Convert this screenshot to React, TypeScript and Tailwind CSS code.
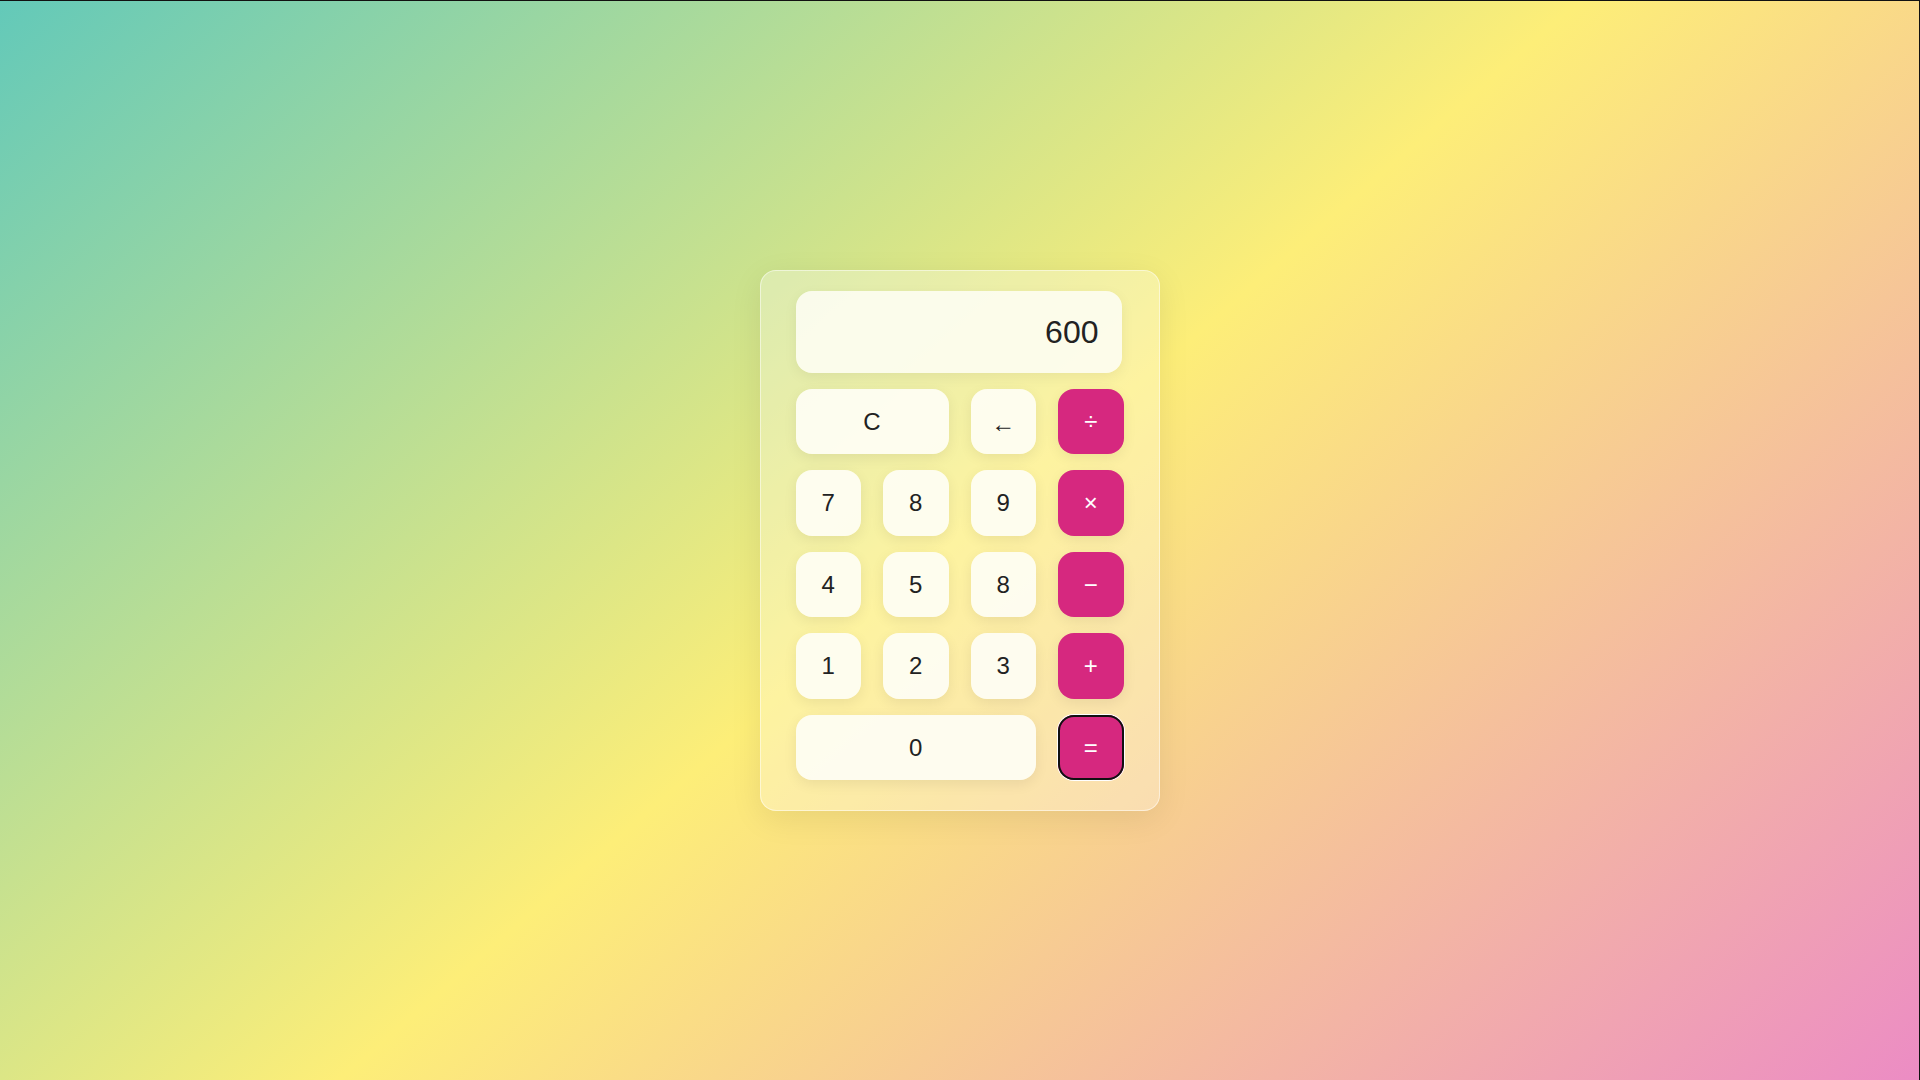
import { useState } from 'react';

const KEYS: { label: string; kind: 'num' | 'op' | 'fn'; span?: string }[] = [
  { label: 'C', kind: 'fn', span: 'col-span-2' },
  { label: '←', kind: 'fn' },
  { label: '÷', kind: 'op' },
  { label: '7', kind: 'num' },
  { label: '8', kind: 'num' },
  { label: '9', kind: 'num' },
  { label: '×', kind: 'op' },
  { label: '4', kind: 'num' },
  { label: '5', kind: 'num' },
  { label: '8', kind: 'num' },
  { label: '−', kind: 'op' },
  { label: '1', kind: 'num' },
  { label: '2', kind: 'num' },
  { label: '3', kind: 'num' },
  { label: '+', kind: 'op' },
  { label: '0', kind: 'num', span: 'col-span-3' },
  { label: '=', kind: 'op' },
];

export default function App() {
  const [display] = useState('600');

  return (
    <div
      className="min-h-screen w-full flex items-center justify-center border-t border-r border-[#111] bg-[linear-gradient(139deg,#63c9b9_0%,#fdee78_50%,#ec8cc4_100%)]"
      style={{ fontFamily: '"Liberation Sans", Arial, sans-serif' }}
    >
      <div className="w-[400px] rounded-2xl border border-white/50 bg-white/30 pt-[20px] px-[35px] pb-[30px] shadow-[0_8px_32px_rgba(0,0,0,0.08)]">
        {/* Display */}
        <div className="h-[82px] w-[326px] rounded-2xl bg-[#fdfdf2]/90 flex items-center justify-end px-[23px] shadow-[0_4px_14px_rgba(0,0,0,0.06)]">
          <span className="text-[32px] text-[#222] leading-none">{display}</span>
        </div>

        {/* Keys */}
        <div className="mt-4 grid grid-cols-4 gap-x-[22px] gap-y-4">
          {KEYS.map((k, i) => {
            const isEq = k.label === '=';
            const base =
              'h-[65.5px] rounded-2xl flex items-center justify-center text-[24px] leading-none';
            const tone =
              k.kind === 'op'
                ? 'bg-[#d6287f] text-white text-[20px] shadow-[0_4px_14px_rgba(0,0,0,0.07)]'
                : 'bg-[#fefdf2]/95 text-[#222] shadow-[0_4px_14px_rgba(0,0,0,0.07)]';
            return (
              <button
                key={i}
                className={`${base} ${tone} ${k.span ?? ''} ${
                  isEq ? 'shadow-[inset_0_0_0_2px_#111,0_0_0_1px_#fff]' : ''
                } ${k.label === '←' ? 'text-[21px] pt-[5px]' : ''}`}
              >
                {k.label}
              </button>
            );
          })}
        </div>
      </div>
    </div>
  );
}
